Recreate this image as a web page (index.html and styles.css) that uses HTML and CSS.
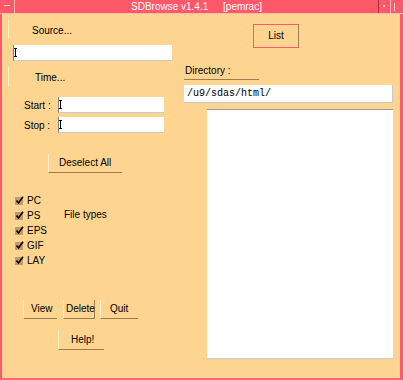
FILE: index.html
```html
<!DOCTYPE html>
<html lang="en">
<head>
  <meta charset="UTF-8">
  <title>SDBrowse v1.4.1 [pemrac]</title>
  <link rel="stylesheet" href="styles.css">
</head>
<body>
  <div class="window">
    <div class="titlebar">
      <div class="tb-menu"><span class="dash"></span></div>
      <div class="tb-title">SDBrowse v1.4.1 <span class="host">[pemrac]</span></div>
      <div class="tb-min"><span class="dot"></span></div>
      <div class="tb-max"><span class="bar"></span></div>
    </div>

    <div class="frame">
      <div class="left">
        <div class="flat-btn source">Source...</div>
        <div class="entry source-entry"><span class="caret"></span></div>

        <div class="flat-btn time">Time...</div>
        <div class="time-row first">
          <span class="time-label">Start :</span>
          <div class="entry time-entry"><span class="caret"></span></div>
        </div>
        <div class="time-row">
          <span class="time-label">Stop :</span>
          <div class="entry time-entry"><span class="caret"></span></div>
        </div>

        <div class="btn deselect">Deselect All</div>

        <div class="types">
          <ul class="checks">
            <li><svg class="box" width="9" height="9" viewBox="0 0 9 9"><rect x="0" y="1" width="8" height="8" fill="#c49c68"/><path d="M1.5 4.5 L3.5 7 L8 0.8" stroke="#000" stroke-width="1.6" fill="none"/></svg>PC</li>
            <li><svg class="box" width="9" height="9" viewBox="0 0 9 9"><rect x="0" y="1" width="8" height="8" fill="#c49c68"/><path d="M1.5 4.5 L3.5 7 L8 0.8" stroke="#000" stroke-width="1.6" fill="none"/></svg>PS</li>
            <li><svg class="box" width="9" height="9" viewBox="0 0 9 9"><rect x="0" y="1" width="8" height="8" fill="#c49c68"/><path d="M1.5 4.5 L3.5 7 L8 0.8" stroke="#000" stroke-width="1.6" fill="none"/></svg>EPS</li>
            <li><svg class="box" width="9" height="9" viewBox="0 0 9 9"><rect x="0" y="1" width="8" height="8" fill="#c49c68"/><path d="M1.5 4.5 L3.5 7 L8 0.8" stroke="#000" stroke-width="1.6" fill="none"/></svg>GIF</li>
            <li><svg class="box" width="9" height="9" viewBox="0 0 9 9"><rect x="0" y="1" width="8" height="8" fill="#c49c68"/><path d="M1.5 4.5 L3.5 7 L8 0.8" stroke="#000" stroke-width="1.6" fill="none"/></svg>LAY</li>
          </ul>
          <span class="types-label">File types</span>
        </div>

        <div class="actions">
          <div class="btn view">View</div>
          <div class="btn delete">Delete</div>
          <div class="btn quit">Quit</div>
        </div>
        <div class="btn help">Help!</div>
      </div>

      <div class="right">
        <div class="list-btn">List</div>
        <div class="dir-label">Directory :</div>
        <div class="dir-entry">/u9/sdas/html/</div>
        <div class="listbox"></div>
      </div>
    </div>
  </div>
</body>
</html>
```

FILE: styles.css
```css
body {
  margin: 0;
  font-family: "Liberation Sans", Arial, sans-serif;
  font-size: 10px;
  color: #000;
}
.window {
  width: 403px;
  height: 380px;
  background: #fdd590;
}

/* title bar */
.titlebar {
  display: flex;
  height: 13px;
  background: #ff5868;
  border-bottom: 1px solid #ffb8b8;
  color: #fff;
}
.tb-menu {
  width: 14px;
  border-right: 1px solid #ffb8b8;
  position: relative;
}
.tb-menu .dash {
  position: absolute;
  left: 4px;
  top: 5px;
  width: 6px;
  height: 1px;
  background: #ffd0d0;
}
.tb-title {
  flex: 1;
  text-align: center;
  line-height: 14px;
}
.tb-title .host {
  margin-left: 12px;
}
.tb-min {
  width: 11px;
  border-left: 1px solid #a03040;
  border-right: 1px solid #ffb8b8;
  position: relative;
}
.tb-min .dot {
  position: absolute;
  left: 4px;
  top: 5px;
  width: 2px;
  height: 2px;
  background: #ffd0d0;
}
.tb-max {
  width: 12px;
  position: relative;
}
.tb-max .bar {
  position: absolute;
  left: 3px;
  top: 3px;
  width: 1px;
  height: 8px;
  background: #ffd0d0;
}

/* main frame */
.frame {
  display: flex;
  height: 366px;
  box-sizing: border-box;
  border-left: 2px solid #ff5868;
  border-right: 3px solid #ff5868;
  border-bottom: 2px solid #ff6878;
}
.left {
  width: 180px;
  display: flex;
  flex-direction: column;
  align-items: flex-start;
}
.right {
  flex: 1;
  display: flex;
  flex-direction: column;
  align-items: flex-start;
}

.flat-btn {
  border-left: 1px solid #fff0cc;
  margin-left: 6px;
  box-sizing: border-box;
}
.source {
  margin-top: 6px;
  height: 19px;
  line-height: 21px;
  padding-left: 23px;
}
.time {
  margin-top: 6px;
  height: 20px;
  line-height: 21px;
  padding-left: 26px;
}

.entry {
  background: #fff;
  box-sizing: border-box;
  border-left: 1px solid #808080;
  border-bottom: 1px solid #c8c8c8;
  position: relative;
}
.caret {
  position: absolute;
  left: 1px;
  top: 3px;
  width: 1px;
  height: 9px;
  background: #000;
}
.caret::before,
.caret::after {
  content: "";
  position: absolute;
  left: -1px;
  width: 3px;
  height: 1px;
  background: #000;
}
.caret::before { top: 0; }
.caret::after { bottom: 0; }

.source-entry {
  margin-top: 6px;
  margin-left: 11px;
  width: 159px;
  height: 16px;
}

.time-row {
  display: flex;
  align-items: center;
  margin-top: 4px;
  padding-left: 22px;
}
.time-row.first {
  margin-top: 10px;
}
.time-label {
  width: 34px;
}
.time-entry {
  width: 106px;
  height: 16px;
}

.btn {
  box-sizing: border-box;
  height: 19px;
  line-height: 18px;
  border-left: 1px solid #fff0cc;
  border-bottom: 1px solid #9c7c50;
}
.deselect {
  margin-top: 21px;
  margin-left: 46px;
  width: 74px;
  padding-left: 10px;
}

.types {
  display: flex;
  margin-top: 20px;
}
.checks {
  list-style: none;
  margin: 0;
  padding: 0 0 0 13px;
  width: 49px;
}
.checks li {
  height: 15px;
  line-height: 15px;
  display: flex;
  align-items: center;
}
.box {
  margin-right: 3px;
}
.types-label {
  margin-top: 14px;
  line-height: 15px;
}

.actions {
  display: flex;
  margin-top: 32px;
  margin-left: 21px;
}
.view {
  width: 34px;
  padding-left: 7px;
}
.delete {
  width: 32px;
  margin-left: 6px;
  padding-left: 2px;
  border-right: 1px solid #9c7c50;
}
.quit {
  width: 38px;
  margin-left: 5px;
  padding-left: 9px;
}
.help {
  margin-top: 11px;
  margin-left: 56px;
  width: 46px;
  height: 20px;
  line-height: 20px;
  padding-left: 12px;
}

.list-btn {
  margin-top: 10px;
  margin-left: 71px;
  width: 46px;
  height: 24px;
  line-height: 22px;
  box-sizing: border-box;
  text-align: center;
  border: 1px solid #ff5868;
  border-right-color: #9c7c50;
}
.dir-label {
  margin-top: 16px;
  margin-left: 2px;
  width: 75px;
  height: 16px;
  line-height: 14px;
  padding-left: 1px;
  box-sizing: border-box;
  border-bottom: 1px solid #9c7c50;
}
.dir-entry {
  margin-top: 5px;
  margin-left: 2px;
  width: 209px;
  height: 18px;
  line-height: 17px;
  box-sizing: border-box;
  padding-left: 3px;
  background: #fff;
  border-right: 1px solid #c8c8c8;
  border-bottom: 1px solid #c8c8c8;
  font-family: "Liberation Mono", monospace;
  font-size: 10px;
}
.listbox {
  margin-top: 6px;
  margin-left: 25px;
  width: 186px;
  height: 250px;
  box-sizing: border-box;
  background: #fff;
  border-top: 1px solid #9a9a9a;
  border-bottom: 1px solid #c4ccd4;
}
```
